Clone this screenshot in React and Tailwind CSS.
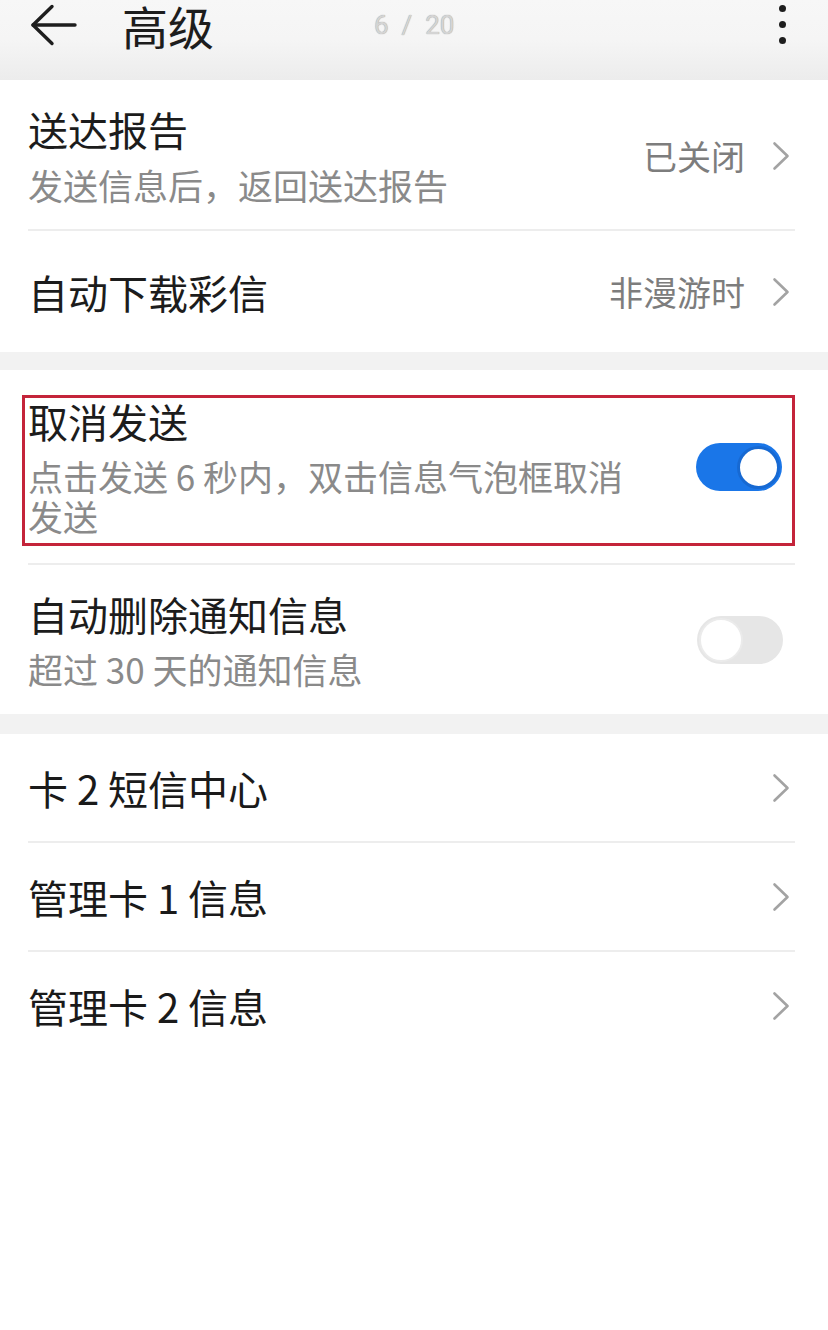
import { useState } from "react";

const font = { fontFamily: '"Noto Sans CJK SC", "Noto Sans", sans-serif' };

function Chevron() {
  return (
    <svg width="18" height="30" viewBox="0 0 18 30" className="shrink-0">
      <polyline points="2.5,2.5 15.5,15 2.5,27.5" fill="none" stroke="#a3a3a3" strokeWidth="2.6" strokeLinecap="round" strokeLinejoin="round" />
    </svg>
  );
}

function Toggle({ on }) {
  return (
    <div className={on ? "w-[86px] h-[48px] rounded-full bg-[#1a76e8] flex items-center justify-end pr-[2px] shrink-0" : "w-[86px] h-[48px] rounded-full bg-[#e6e6e6] flex items-center justify-start pl-[2px] shrink-0"}>
      <div className={on ? "w-[43px] h-[43px] rounded-full bg-white border-[3px] border-[#1769d2]" : "w-[44px] h-[44px] rounded-full bg-white border-[2px] border-[#ebebeb]"} />
    </div>
  );
}

function Divider() {
  return <div className="ml-[28px] mr-[33px] h-[2px] bg-[#ededed]" />;
}

export default function App() {
  const [cancelSend, setCancelSend] = useState(true);

  return (
    <div className="w-[828px] min-h-[1330px] bg-white" style={font}>
      {/* header */}
      <div className="h-[80px] bg-gradient-to-b from-[#f7f7f7] via-[#f5f5f5] to-[#ececec]">
        <div className="h-[50px] flex items-center pl-[30px] pr-[42px]">
          <svg width="48" height="42" viewBox="0 0 48 42" className="shrink-0">
            <polyline points="22,2.5 3,21 22,39.5" fill="none" stroke="#1e1e1e" strokeWidth="3.4" strokeLinecap="round" strokeLinejoin="round" />
            <line x1="3" y1="21" x2="45" y2="21" stroke="#1e1e1e" strokeWidth="3.4" strokeLinecap="round" />
          </svg>
          <div className="ml-[44px] text-[46px] leading-[50px] text-[#1d1d1d]">高级</div>
          <div className="ml-[160px] text-[26px] leading-[30px] text-[#d4d4d4] whitespace-pre" style={{ fontFamily: 'Roboto, "Noto Sans", sans-serif', textShadow: "0 0 1px #8f8f8f" }}>
            {"6  /  20"}
          </div>
          <div className="ml-auto flex flex-col items-center gap-[9px] -mt-[2px]">
            <div className="w-[7px] h-[7px] rounded-full bg-[#1e1e1e]" />
            <div className="w-[7px] h-[7px] rounded-full bg-[#1e1e1e]" />
            <div className="w-[7px] h-[7px] rounded-full bg-[#1e1e1e]" />
          </div>
        </div>
      </div>

      {/* section 1 */}
      <div className="h-[149px] flex items-center pl-[28px] pr-[38px] pt-[1px]">
        <div className="flex-1">
          <div className="text-[40px] leading-[46px] text-[#1c1c1c]">送达报告</div>
          <div className="mt-[13px] text-[35px] leading-[40px] text-[#8a8a8a]">发送信息后，返回送达报告</div>
        </div>
        <div className="flex items-center gap-[27px] mt-[2px]">
          <span className="text-[34px] leading-[40px] text-[#7d7d7d]">已关闭</span>
          <Chevron />
        </div>
      </div>
      <Divider />
      <div className="h-[121px] flex items-center pl-[28px] pr-[38px]">
        <div className="flex-1 text-[40px] leading-[46px] text-[#1c1c1c]">自动下载彩信</div>
        <div className="flex items-center gap-[27px]">
          <span className="text-[34px] leading-[40px] text-[#7d7d7d]">非漫游时</span>
          <Chevron />
        </div>
      </div>

      <div className="h-[18px] bg-[#f2f2f2]" />

      {/* section 2 */}
      <div className="pt-[25px] pb-[17px] pl-[22px] pr-[33px]">
        <div className="border-[3px] border-[#c4243a] pl-[3px] pr-[10px] pb-[7px] flex items-start">
          <div className="w-[615px]">
            <div className="text-[40px] leading-[46px] text-[#1c1c1c]">取消发送</div>
            <div className="mt-[12px] text-[35px] leading-[40px] text-[#8a8a8a]">点击发送 6 秒内，双击信息气泡框取消发送</div>
          </div>
          <button className="ml-auto mt-[45px]" onClick={() => setCancelSend(!cancelSend)}>
            <Toggle on={cancelSend} />
          </button>
        </div>
      </div>
      <Divider />
      <div className="h-[149px] flex items-center pl-[28px] pr-[45px]">
        <div className="flex-1">
          <div className="text-[40px] leading-[46px] text-[#1c1c1c]">自动删除通知信息</div>
          <div className="mt-[12px] text-[35px] leading-[40px] text-[#8a8a8a]">超过 30 天的通知信息</div>
        </div>
        <Toggle on={false} />
      </div>

      <div className="h-[20px] bg-[#f2f2f2]" />

      {/* section 3 */}
      {["卡 2 短信中心", "管理卡 1 信息", "管理卡 2 信息"].map((t, i) => (
        <div key={t}>
          {i > 0 && <Divider />}
          <div className="h-[107px] flex items-center pl-[28px] pr-[38px]">
            <div className="flex-1 text-[40px] leading-[46px] text-[#1a1a1a]">{t}</div>
            <Chevron />
          </div>
        </div>
      ))}
    </div>
  );
}
